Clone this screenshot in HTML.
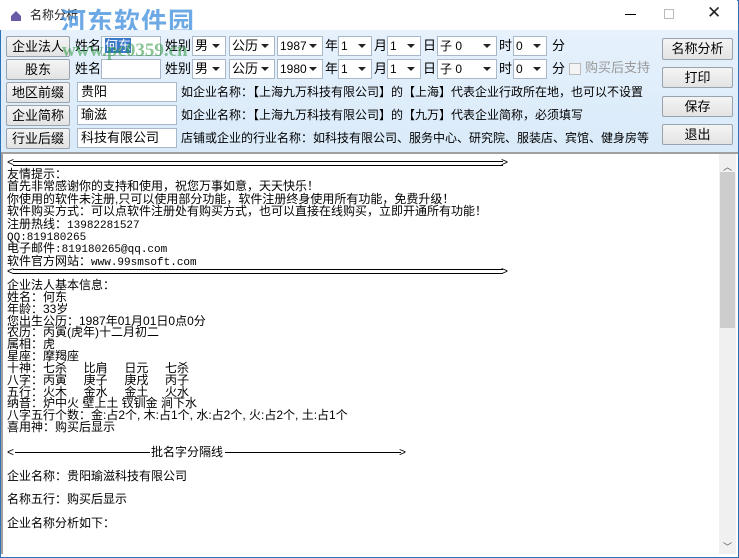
<!DOCTYPE html>
<html><head><meta charset="utf-8"><style>
*{box-sizing:border-box;margin:0;padding:0}
body{width:739px;height:558px;overflow:hidden;background:#fff;font-family:"Liberation Sans","Noto Sans CJK SC",sans-serif;font-size:12px;color:#000;position:relative}
.win{position:absolute;left:0;top:0;width:739px;height:558px;border:1px solid #2e73b8}
.title{position:absolute;left:0;top:0;width:737px;height:30px;background:#fff}
.panel{position:absolute;left:1px;top:30px;width:737px;height:122px;background:linear-gradient(#e6f1fc,#d9eaf9)}
.a{position:absolute;white-space:nowrap}
.btn{position:absolute;border:1px solid #9aa3ad;background:linear-gradient(#f4f4f4,#e3e3e3);text-align:center;font-size:13px;line-height:19px;border-radius:2px}
.inp{position:absolute;background:#fff;border:1px solid #a9b8c8;height:20px;font-size:13px;line-height:18px;padding-left:3px}
.sel{position:absolute;background:#fff;border:1px solid #a9b8c8;height:20px;font-size:12px;line-height:18px;padding-left:2px}
.sel:after{content:"";position:absolute;right:5px;top:7px;border-left:4px solid transparent;border-right:4px solid transparent;border-top:4px solid #222}
.lbl{position:absolute;font-size:13px;line-height:20px;white-space:nowrap}
.lbl2{position:absolute;font-size:12px;line-height:20px;white-space:nowrap}
.txt{position:absolute;left:1px;top:152px;width:737px;height:402px;background:#fff;border-top:2px solid #a0a0a0;border-left:2px solid #a0a0a0}
.mono{font-family:"Liberation Mono","Noto Sans CJK SC",monospace;font-size:11px}
.arr{position:absolute;height:5px;border-top:1px solid #000;border-bottom:1px solid #000}
.line{position:absolute;left:4px;font-size:12px;line-height:13px;white-space:nowrap}
.blk{position:absolute;left:4px;font-size:12px;white-space:nowrap}
.blk div{overflow:visible;line-height:12px}
.b1 div{height:12.4px}
.b2 div{height:11.85px}
</style></head><body>
<div class="win"></div>
<div class="title">
 <svg class="a" style="left:10px;top:10px" width="12" height="12"><path d="M1 6L6 1L11 6V11H1Z" fill="#6a5aa8"/></svg>
 <div class="a" style="left:30px;top:6px;font-size:12px;color:#222">名称分析</div>
 <div class="a" style="left:60px;top:2px;font-size:26px;font-weight:bold;color:rgba(60,140,220,.75);letter-spacing:1px">河东软件园</div>
 <div class="a" style="left:625px;top:14px;width:11px;height:1px;background:#000"></div>
 <div class="a" style="left:664px;top:9px;width:10px;height:10px;border:1px solid #bbb"></div>
 <div class="a" style="left:707px;top:3px;font-size:17px;color:#222">✕</div>
</div>
<div class="panel"></div>
<div class="a" style="left:62px;top:40px;font-size:19px;font-weight:bold;color:rgba(40,150,60,.55);font-family:'Liberation Serif',serif;z-index:5">www.pc0359.cn</div>
<!-- row1 -->
<div class="btn" style="left:6px;top:36px;width:64px;height:21px">企业法人</div>
<div class="lbl" style="left:75px;top:36px">姓名</div>
<div class="inp" style="left:101px;top:36px;width:60px"><span style="background:#3a78c8;color:#fff">何东</span></div>
<div class="lbl" style="left:165px;top:36px">姓别</div>
<div class="sel" style="left:192px;top:36px;width:34px;font-size:13px">男</div>
<div class="sel" style="left:229px;top:36px;width:46px;font-size:13px">公历</div>
<div class="sel" style="left:277px;top:36px;width:46px">1987</div>
<div class="lbl" style="left:325px;top:36px">年</div>
<div class="sel" style="left:338px;top:36px;width:34px">1</div>
<div class="lbl" style="left:374px;top:36px">月</div>
<div class="sel" style="left:387px;top:36px;width:34px">1</div>
<div class="lbl" style="left:423px;top:36px">日</div>
<div class="sel" style="left:437px;top:36px;width:60px">子 0</div>
<div class="lbl" style="left:499px;top:36px">时</div>
<div class="sel" style="left:513px;top:36px;width:34px">0</div>
<div class="lbl" style="left:552px;top:36px">分</div>
<!-- row2 -->
<div class="btn" style="left:6px;top:59px;width:64px;height:21px">股东</div>
<div class="lbl" style="left:75px;top:59px">姓名</div>
<div class="inp" style="left:101px;top:59px;width:60px"></div>
<div class="lbl" style="left:165px;top:59px">姓别</div>
<div class="sel" style="left:192px;top:59px;width:34px;font-size:13px">男</div>
<div class="sel" style="left:229px;top:59px;width:46px;font-size:13px">公历</div>
<div class="sel" style="left:277px;top:59px;width:46px">1980</div>
<div class="lbl" style="left:325px;top:59px">年</div>
<div class="sel" style="left:338px;top:59px;width:34px">1</div>
<div class="lbl" style="left:374px;top:59px">月</div>
<div class="sel" style="left:387px;top:59px;width:34px">1</div>
<div class="lbl" style="left:423px;top:59px">日</div>
<div class="sel" style="left:437px;top:59px;width:60px">子 0</div>
<div class="lbl" style="left:499px;top:59px">时</div>
<div class="sel" style="left:513px;top:59px;width:34px">0</div>
<div class="lbl" style="left:552px;top:59px">分</div>
<div class="a" style="left:569px;top:63px;width:12px;height:12px;border:1px solid #bbb;background:#f4f4f4"></div>
<div class="lbl" style="left:585px;top:58px;color:#999">购买后支持</div>
<!-- rows 3-5 -->
<div class="btn" style="left:6px;top:82px;width:64px;height:21px">地区前缀</div>
<div class="inp" style="left:77px;top:82px;width:100px">贵阳</div>
<div class="lbl2" style="left:181px;top:82px">如企业名称：【上海九万科技有限公司】的【上海】代表企业行政所在地，也可以不设置</div>
<div class="btn" style="left:6px;top:105px;width:64px;height:21px">企业简称</div>
<div class="inp" style="left:77px;top:105px;width:100px">瑜滋</div>
<div class="lbl2" style="left:181px;top:105px">如企业名称：【上海九万科技有限公司】的【九万】代表企业简称，必须填写</div>
<div class="btn" style="left:6px;top:128px;width:64px;height:21px">行业后缀</div>
<div class="inp" style="left:77px;top:128px;width:100px">科技有限公司</div>
<div class="lbl2" style="left:181px;top:128px">店铺或企业的行业名称：如科技有限公司、服务中心、研究院、服装店、宾馆、健身房等</div>
<div class="btn" style="left:662px;top:38px;width:71px;height:22px;line-height:20px">名称分析</div>
<div class="btn" style="left:662px;top:67px;width:71px;height:21px">打印</div>
<div class="btn" style="left:662px;top:96px;width:71px;height:21px">保存</div>
<div class="btn" style="left:662px;top:124px;width:71px;height:21px">退出</div>
<!-- text area -->
<div class="txt">
 <div class="a" style="left:716px;top:0;width:17px;height:400px;background:#f0f0f0"></div>
 <div class="a" style="left:717px;top:18px;width:15px;height:156px;background:#cdcdcd"></div>
 <div class="a" style="left:720px;top:6px;font-size:9px;color:#555">︿</div>
 <div class="a" style="left:720px;top:386px;font-size:9px;color:#555">﹀</div>
 <div class="line" style="top:2px">&lt;</div><div class="arr" style="left:10px;top:7px;width:490px"></div><div class="line" style="left:498px;top:2px">&gt;</div>
 <div class="blk b1" style="top:14px">
  <div>友情提示：</div><div>首先非常感谢你的支持和使用，祝您万事如意，天天快乐！</div><div>你使用的软件未注册,只可以使用部分功能，软件注册终身使用所有功能，免费升级！</div><div>软件购买方式：可以点软件注册处有购买方式，也可以直接在线购买，立即开通所有功能！</div><div>注册热线：<span class="mono">13982281527</span></div><div><span class="mono">QQ:819180265</span></div><div>电子邮件<span class="mono">:819180265@qq.com</span></div><div>软件官方网站：<span class="mono">www.99smsoft.com</span></div>
 </div>
 <div class="line" style="top:111px">&lt;</div><div class="arr" style="left:10px;top:115px;width:490px"></div><div class="line" style="left:498px;top:111px">&gt;</div>
 <div class="blk b2" style="top:125px">
  <div>企业法人基本信息：</div><div>姓名：何东</div><div>年龄：33岁</div><div>您出生公历：1987年01月01日0点0分</div><div>农历：丙寅(虎年)十二月初二</div><div>属相：虎</div><div>星座：摩羯座</div><div>十神：七杀&nbsp;&nbsp;&nbsp;&nbsp;&nbsp;比肩&nbsp;&nbsp;&nbsp;&nbsp;&nbsp;日元&nbsp;&nbsp;&nbsp;&nbsp;&nbsp;七杀</div><div>八字：丙寅&nbsp;&nbsp;&nbsp;&nbsp;&nbsp;庚子&nbsp;&nbsp;&nbsp;&nbsp;&nbsp;庚戌&nbsp;&nbsp;&nbsp;&nbsp;&nbsp;丙子</div><div>五行：火木&nbsp;&nbsp;&nbsp;&nbsp;&nbsp;金水&nbsp;&nbsp;&nbsp;&nbsp;&nbsp;金土&nbsp;&nbsp;&nbsp;&nbsp;&nbsp;火水</div><div>纳音：炉中火 壁上土 钗钏金 涧下水</div><div>八字五行个数：金:占2个, 木:占1个, 水:占2个, 火:占2个, 土:占1个</div><div>喜用神：购买后显示</div>
 </div>
 <div class="line" style="top:292px">&lt;</div><div class="a" style="left:12px;top:298px;width:135px;height:1px;background:#000"></div><div class="line" style="left:148px;top:292px">批名字分隔线</div><div class="a" style="left:222px;top:298px;width:176px;height:1px;background:#000"></div><div class="line" style="left:396px;top:292px">&gt;</div>
 <div class="line" style="top:316px">企业名称：贵阳瑜滋科技有限公司</div>
 <div class="line" style="top:339px">名称五行：购买后显示</div>
 <div class="line" style="top:363px">企业名称分析如下：</div>
</div>
</body></html>
